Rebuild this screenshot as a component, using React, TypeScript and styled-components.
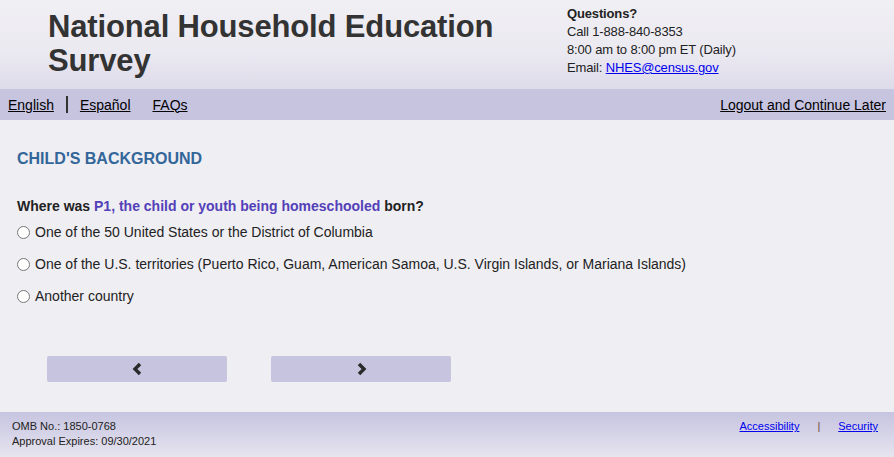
import React from "react";
import styled, { createGlobalStyle } from "styled-components";

const Global = createGlobalStyle`
  html, body { margin: 0; padding: 0; }
  body {
    background: #efeef3;
    font-family: "Liberation Sans", Arial, sans-serif;
    color: #222;
  }
`;

const Page = styled.div`
  width: 894px;
  min-height: 457px;
  display: flex;
  flex-direction: column;
  background: #efeef3;
`;

const Header = styled.header`
  height: 89px;
  box-sizing: border-box;
  display: flex;
  justify-content: space-between;
  background: linear-gradient(to bottom, #f0eff4 0%, #eceaf1 55%, #dedbea 100%);
`;

const Title = styled.h1`
  margin: 0;
  padding: 10px 0 0 48px;
  width: 480px;
  font-size: 31px;
  letter-spacing: -0.15px;
  line-height: 34px;
  font-weight: bold;
  color: #333;
`;

const Contact = styled.div`
  width: 327px;
  padding-top: 5px;
  font-size: 13px;
  letter-spacing: -0.15px;
  line-height: 18px;
  color: #222;
`;

const ContactTitle = styled.div`
  font-weight: bold;
`;

const BlueLink = styled.a`
  color: #0000ee;
  text-decoration: underline;
`;

const Nav = styled.nav`
  height: 31px;
  background: #c7c4e0;
  display: flex;
  align-items: center;
  justify-content: space-between;
  padding: 0 8px;
  font-size: 14px;
`;

const NavGroup = styled.div`
  display: flex;
  align-items: center;
`;

const NavLink = styled.a<{ $gap?: number }>`
  color: #000;
  text-decoration: underline;
  margin-right: ${(p) => p.$gap ?? 0}px;
`;

const NavSep = styled.span`
  display: inline-block;
  width: 2px;
  height: 17px;
  background: #333;
  margin: 0 12px 0 12px;
`;

const Main = styled.main`
  flex: 1;
  padding: 29px 17px 0 17px;
  display: flex;
  flex-direction: column;
`;

const SectionTitle = styled.h2`
  margin: 0;
  font-size: 16px;
  line-height: 20px;
  color: #336699;
  font-weight: bold;
`;

const Question = styled.p`
  margin: 27px 0 0 0;
  font-size: 14px;
  line-height: 20px;
  font-weight: bold;
  color: #222;
`;

const Fill = styled.span`
  color: #5340b8;
`;

const Options = styled.div`
  display: flex;
  flex-direction: column;
  gap: 12px;
  margin-top: 6px;
`;

const Option = styled.label`
  display: flex;
  align-items: center;
  font-size: 14px;
  line-height: 20px;
  color: #222;
`;

const Radio = styled.span`
  width: 11px;
  height: 11px;
  border: 1px solid #777;
  border-radius: 50%;
  background: #fff;
  margin-right: 5px;
  flex-shrink: 0;
`;

const Buttons = styled.div`
  display: flex;
  gap: 44px;
  margin: 50px 0 0 30px;
`;

const NavButton = styled.button`
  width: 180px;
  height: 26px;
  border: none;
  border-radius: 2px;
  background: #c7c4e0;
  color: #222;
  display: flex;
  align-items: center;
  justify-content: center;
  padding: 0;
  cursor: pointer;
`;

const Footer = styled.footer`
  height: 45px;
  margin-top: 30px;
  box-sizing: border-box;
  padding: 7px 16px 0 12px;
  display: flex;
  justify-content: space-between;
  background: linear-gradient(to bottom, #c7c4e0 0%, #d9d7e9 60%, #e6e5ef 100%);
  font-size: 11px;
  line-height: 15px;
  color: #222;
`;

const FooterLinks = styled.div`
  display: flex;
  align-items: flex-start;
  gap: 18px;
`;

const FooterSep = styled.span`
  color: #6b4a3e;
`;

const Chevron = ({ dir }: { dir: "left" | "right" }) => (
  <svg width="11" height="14" viewBox="0 0 11 14" aria-hidden="true">
    <polyline
      points={dir === "left" ? "8,2 3,7 8,12" : "3,2 8,7 3,12"}
      fill="none"
      stroke="#2a2a2a"
      strokeWidth="3.4"
      strokeLinejoin="miter"
      strokeLinecap="butt"
    />
  </svg>
);

export default function App() {
  return (
    <>
      <Global />
      <Page>
        <Header>
          <Title>National Household Education Survey</Title>
          <Contact>
            <ContactTitle>Questions?</ContactTitle>
            <div>Call 1-888-840-8353</div>
            <div>8:00 am to 8:00 pm ET (Daily)</div>
            <div>
              Email: <BlueLink href="#">NHES@census.gov</BlueLink>
            </div>
          </Contact>
        </Header>
        <Nav>
          <NavGroup>
            <NavLink href="#">English</NavLink>
            <NavSep />
            <NavLink href="#" $gap={22}>Español</NavLink>
            <NavLink href="#">FAQs</NavLink>
          </NavGroup>
          <NavLink href="#">Logout and Continue Later</NavLink>
        </Nav>
        <Main>
          <SectionTitle>CHILD'S BACKGROUND</SectionTitle>
          <Question>
            Where was <Fill>P1, the child or youth being homeschooled</Fill> born?
          </Question>
          <Options>
            <Option><Radio />One of the 50 United States or the District of Columbia</Option>
            <Option><Radio />One of the U.S. territories (Puerto Rico, Guam, American Samoa, U.S. Virgin Islands, or Mariana Islands)</Option>
            <Option><Radio />Another country</Option>
          </Options>
          <Buttons>
            <NavButton aria-label="Previous"><Chevron dir="left" /></NavButton>
            <NavButton aria-label="Next"><Chevron dir="right" /></NavButton>
          </Buttons>
        </Main>
        <Footer>
          <div>
            <div>OMB No.: 1850-0768</div>
            <div>Approval Expires: 09/30/2021</div>
          </div>
          <FooterLinks>
            <BlueLink href="#">Accessibility</BlueLink>
            <FooterSep>|</FooterSep>
            <BlueLink href="#">Security</BlueLink>
          </FooterLinks>
        </Footer>
      </Page>
    </>
  );
}
